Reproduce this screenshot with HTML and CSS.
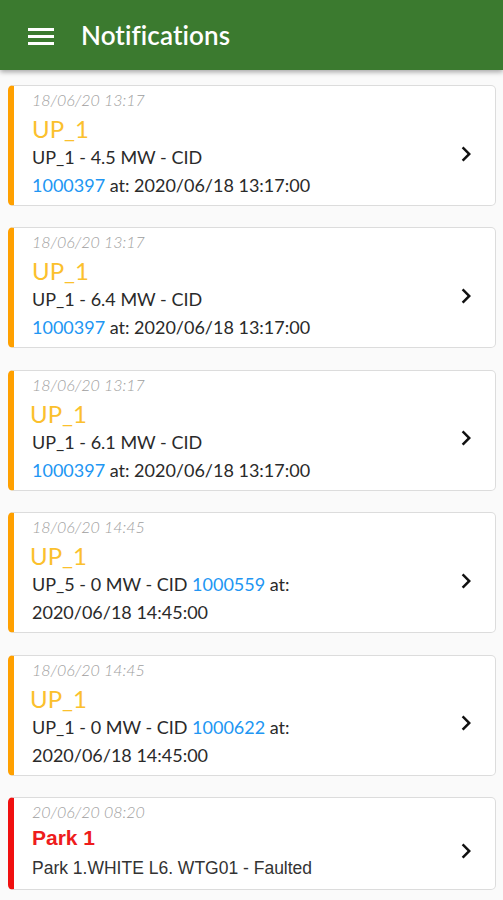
FILE: index.html
```html
<!DOCTYPE html>
<html>
<head>
<meta charset="utf-8">
<link rel="stylesheet" href="styles.css">
</head>
<body>
<header class="appbar">
  <svg class="menu" viewBox="0 0 26 17" width="26" height="17"><rect x="0" y="0" width="26" height="3" fill="#fff"/><rect x="0" y="7" width="26" height="3" fill="#fff"/><rect x="0" y="14" width="26" height="3" fill="#fff"/></svg>
  <h1 class="title">Notifications</h1>
</header>
<main class="list">
  <div class="card warn">
    <div class="body">
      <div class="date">18/06/20 13:17</div>
      <div class="name">UP_1</div>
      <div class="msg">UP_1 - 4.5 MW - CID<br><span class="link">1000397</span> at: 2020/06/18 13:17:00</div>
    </div>
    <svg class="chev" viewBox="0 0 24 24" width="30" height="30"><path d="M10 6L8.59 7.41 13.17 12l-4.58 4.59L10 18l6-6z"/></svg>
  </div>
  <div class="card warn">
    <div class="body">
      <div class="date">18/06/20 13:17</div>
      <div class="name">UP_1</div>
      <div class="msg">UP_1 - 6.4 MW - CID<br><span class="link">1000397</span> at: 2020/06/18 13:17:00</div>
    </div>
    <svg class="chev" viewBox="0 0 24 24" width="30" height="30"><path d="M10 6L8.59 7.41 13.17 12l-4.58 4.59L10 18l6-6z"/></svg>
  </div>
  <div class="card warn">
    <div class="body">
      <div class="date">18/06/20 13:17</div>
      <div class="name shift">UP_1</div>
      <div class="msg">UP_1 - 6.1 MW - CID<br><span class="link">1000397</span> at: 2020/06/18 13:17:00</div>
    </div>
    <svg class="chev" viewBox="0 0 24 24" width="30" height="30"><path d="M10 6L8.59 7.41 13.17 12l-4.58 4.59L10 18l6-6z"/></svg>
  </div>
  <div class="card warn">
    <div class="body">
      <div class="date">18/06/20 14:45</div>
      <div class="name shift">UP_1</div>
      <div class="msg">UP_5 - 0 MW - CID <span class="link">1000559</span> at:<br>2020/06/18 14:45:00</div>
    </div>
    <svg class="chev" viewBox="0 0 24 24" width="30" height="30"><path d="M10 6L8.59 7.41 13.17 12l-4.58 4.59L10 18l6-6z"/></svg>
  </div>
  <div class="card warn">
    <div class="body">
      <div class="date">18/06/20 14:45</div>
      <div class="name shift">UP_1</div>
      <div class="msg">UP_1 - 0 MW - CID <span class="link">1000622</span> at:<br>2020/06/18 14:45:00</div>
    </div>
    <svg class="chev" viewBox="0 0 24 24" width="30" height="30"><path d="M10 6L8.59 7.41 13.17 12l-4.58 4.59L10 18l6-6z"/></svg>
  </div>
  <div class="card fault">
    <div class="body">
      <div class="date">20/06/20 08:20</div>
      <div class="name park">Park 1</div>
      <div class="msg park-msg">Park 1.WHITE L6. WTG01 - Faulted</div>
    </div>
    <svg class="chev" viewBox="0 0 24 24" width="30" height="30"><path d="M10 6L8.59 7.41 13.17 12l-4.58 4.59L10 18l6-6z"/></svg>
  </div>
</main>
</body>
</html>
```

FILE: styles.css
```css
html, body {
  margin: 0;
  padding: 0;
  background: #fafafa;
  font-family: Lato, "Liberation Sans", sans-serif;
  overflow: hidden;
}
.appbar {
  height: 70px;
  background: #3b7a2f;
  display: flex;
  align-items: center;
  padding-left: 28px;
  box-shadow: 0 2px 5px rgba(0,0,0,0.35);
  position: relative;
  z-index: 1;
}
.menu {
  display: block;
  margin-top: 2px;
}
.title {
  margin: 0 0 0 27px;
  color: #fff;
  font-size: 26px;
  font-weight: 600;
  letter-spacing: 0.1px;
}
.list {
  display: flex;
  flex-direction: column;
  gap: 21.4px;
  padding: 15px 7px 20px 8px;
}
.card {
  display: flex;
  align-items: center;
  background: #fff;
  border: 1px solid #dcdcdc;
  border-left: 6px solid #ffa000;
  border-radius: 5px;
  height: 121px;
  box-sizing: border-box;
  flex: none;
}
.card.fault {
  border-left-color: #f01010;
  height: 93px;
}
.body {
  flex: 1;
  align-self: flex-start;
  padding: 3px 0 0 18px;
}
.date {
  font-size: 16px;
  line-height: 22px;
  font-style: italic;
  font-weight: 300;
  color: #9e9e9e;
}
.name {
  margin-top: 4px;
  font-size: 24px;
  line-height: 28px;
  color: #fbc02d;
}
.name.shift {
  margin-left: -2px;
}
.msg {
  font-size: 18px;
  line-height: 28px;
  color: #2a2a2a;
}
.link {
  color: #2196f3;
}
.name.park {
  margin-top: 2px;
  font-family: "Liberation Sans", Arial, sans-serif;
  font-weight: bold;
  font-size: 21px;
  line-height: 26px;
  color: #ee1c1c;
}
.msg.park-msg {
  margin-top: 3px;
  font-family: "Liberation Sans", Arial, sans-serif;
  font-size: 17.5px;
  color: #333;
}
.chev {
  flex: none;
  margin: 16px 14px 0 0;
  fill: #111;
}
```
